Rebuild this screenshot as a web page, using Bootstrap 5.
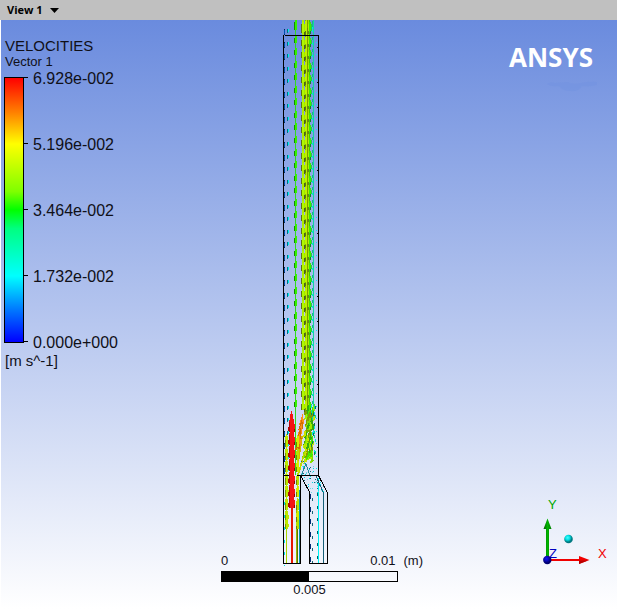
<!DOCTYPE html>
<html lang="en">
<head>
<meta charset="utf-8">
<meta name="viewport" content="width=device-width, initial-scale=1">
<title>View 1 - Velocities</title>
<link href="https://cdn.jsdelivr.net/npm/bootstrap@5.3.0/dist/css/bootstrap.min.css" rel="stylesheet">
<style>
  body { font-family: "Liberation Sans", Arial, sans-serif; color: #101018; background: #fff; }
  .view-bar { background: #c0c0c0; height: 20px; padding-left: 7px; }
  .view-btn { font: bold 11px/20px "Open Sans", Tahoma, sans-serif; color: #000; gap: 7px; }
  .viewport { background: linear-gradient(#6a8bde, #fff); margin-left: 1px; }
  .legend-pane { width: 220px; padding: 18px 0 0 3px; }
  .legend-title { font-size: 15px; line-height: 16px; padding-left: 1px; }
  .legend-sub { font-size: 13px; line-height: 15px; padding-left: 1px; }
  .ramp { width: 20px; margin: 8px 0 10px; border: 1px solid #000;
    background: linear-gradient(#f00 0%, #ff8000 13%, #ff0 25%, #7fff00 43%, #0f0 50%, #00ff80 57%, #0ff 75%, #0080ff 87%, #00f 100%); }
  .ramp-labels { height: 284px; font-size: 16px; line-height: 20px; }
  .ramp-labels li { gap: 5px; }
  .ramp-labels li::before { content: ""; width: 4px; height: 1px; margin-bottom: 3px; background: #000; }
  .legend-unit { font-size: 15px; line-height: 16px; padding-left: 1px; }
  .stage { display: grid; }
  .stage > * { grid-area: 1 / 1; }
  .duct { margin-left: 59px; }
  .scale { font-size: 13px; line-height: 16px; padding-bottom: 11px; }
  .scale-top { width: 202px; margin-bottom: 2px; }
  .scale-bar { width: 177px; height: 11px; border: 1px solid #000; background: linear-gradient(90deg, #000 50%, #fff0 50%); }
  .scale-mid { width: 177px; }
  .side-pane { padding: 18px 4px 40px 0; }
  .brand { font: bold 26px/38px "Open Sans", sans-serif; color: #fff; padding-right: 16px; }
  .brand span { padding-right: 4px; }
  .brand svg { display: block; margin: 5px 0 0 auto; }
</style>
</head>
<body class="d-flex flex-column min-vh-100">
<header class="view-bar d-flex align-items-center">
  <button type="button" class="view-btn border-0 bg-transparent p-0 d-flex align-items-center">View 1
    <svg width="9" height="5" aria-hidden="true"><path d="M0 0H9L4.500 5Z"/></svg>
  </button>
</header>
<main class="viewport flex-grow-1 d-flex">
  <section class="legend-pane flex-shrink-0" aria-label="Legend">
    <div class="legend-title">VELOCITIES</div>
    <div class="legend-sub">Vector 1</div>
    <div class="d-flex">
      <div class="ramp"></div>
      <ul class="ramp-labels list-unstyled mb-0 d-flex flex-column justify-content-between">
        <li class="d-flex align-items-center">6.928e-002</li>
        <li class="d-flex align-items-center">5.196e-002</li>
        <li class="d-flex align-items-center">3.464e-002</li>
        <li class="d-flex align-items-center">1.732e-002</li>
        <li class="d-flex align-items-center">0.000e+000</li>
      </ul>
    </div>
    <div class="legend-unit">[m s^-1]</div>
  </section>
  <section class="stage flex-shrink-0" aria-label="Velocity vectors">
    <svg class="duct" width="60" height="546" viewBox="280 20 60 546" role="img" aria-label="Vector plot of the duct">
      <g id="flow" shape-rendering="crispEdges"></g>
      <g id="jets" shape-rendering="crispEdges">
        <path d="M286.500 529V563" stroke="#a8d400"/>
        <path d="M296.500 505V563" stroke="#a0b400"/><path d="M297.500 505V563" stroke="#5c7800"/>
        <path d="M299.500 490V563" stroke="#0099b4"/>
        <path d="M318.500 478V563" stroke="#00f0f4"/>
        <path d="M316 476L323.500 493V563" stroke="#176078" fill="none"/>
      </g>
      <g fill="none" stroke="#000" shape-rendering="crispEdges">
        <path d="M285 35.500H318.500V475.500M283.500 35V563.500H300.500V475.500M283 475.500H289M297 475.500H318.500"/>
        <path d="M300.500 475.500L309.500 492V563.500H327.500V493L318.500 475.500"/>
      </g>
    </svg>
    <div class="scale align-self-end">
      <div class="scale-top d-flex"><span class="flex-grow-1">0</span><span>0.01</span><span class="ps-2">(m)</span></div>
      <div class="scale-bar"></div>
      <div class="scale-mid text-center">0.005</div>
    </div>
  </section>
  <aside class="side-pane flex-grow-1 d-flex flex-column justify-content-between align-items-end">
    <div class="brand"><span>ANSYS</span>
      <svg width="50" height="11" fill="#7090e0" fill-opacity=".4" aria-hidden="true"><path d="M0 3Q4 0 8 2L20 1Q27 4 34 2Q42 0 50 1V4Q42 6 35 5Q32 11 24 10Q15 10 12 5Q4 6 0 3Z"/></svg>
    </div>
    <svg width="72" height="74" viewBox="541 496 72 74" role="img" aria-label="Axes">
      <defs>
        <linearGradient id="gy"><stop stop-color="#006000"/><stop offset=".5" stop-color="#00b400"/><stop offset="1" stop-color="#007c00"/></linearGradient>
        <radialGradient id="gc" cx=".4" cy=".35"><stop stop-color="#4ff"/><stop offset=".55" stop-color="#00dde0"/><stop offset="1" stop-color="#007880"/></radialGradient>
        <radialGradient id="gb" cx=".4" cy=".35"><stop stop-color="#11f"/><stop offset="1" stop-color="#000070"/></radialGradient>
      </defs>
      <path d="M546 528H549V560H546ZM547.500 519.500L551.500 530H543.500Z" fill="url(#gy)"/>
      <path d="M548 560H579V562H548ZM579 557L589.500 561L579 565Z" fill="#f00000"/>
      <path d="M579 561.500H588L579 565Z" fill="#b80000"/>
      <circle cx="568.500" cy="540" r="4.300" fill="url(#gc)"/>
      <g font-family="Liberation Sans, Arial, sans-serif" font-size="13">
        <text x="548" y="510" fill="#00a800">Y</text>
        <text x="598" y="559" fill="#f00000">X</text>
        <text x="549" y="559" fill="#0000c0">Z</text>
      </g>
      <circle cx="547.300" cy="561" r="4.200" fill="url(#gb)"/>
    </svg>
  </aside>
</main>
<script>
  const flow = document.getElementById("flow"), jets = document.getElementById("jets");
  let seed = 7;
  const rnd = () => (seed = (seed * 16807) % 2147483647) / 2147483647;
  const draw = (group, d, fill) => {
    const p = document.createElementNS("http://www.w3.org/2000/svg", "path");
    p.setAttribute("d", d); p.setAttribute("fill", fill); group.appendChild(p);
  };
  const box = (g, x, y, w, h, c) => draw(g, `M${x} ${Math.round(y)}h${w}v${h}h${-w}z`, c);

  // Continuous streamline shafts
  box(flow, 295, 20, 1, 455, "#30d820");
  box(flow, 302, 20, 2, 390, "#acec00");
  box(flow, 305, 20, 1, 390, "#88b000");
  box(flow, 306, 20, 1, 390, "#b8f000");
  box(flow, 307, 20, 1, 390, "#7c9c00");
  box(flow, 308, 20, 1, 390, "#a0dc00");
  box(flow, 309, 20, 1, 400, "#40c800");
  box(flow, 313, 20, 1, 400, "#10d8a0");

  // Arrowheads, one row per grid station
  for (let i = -1; i < 36; i++) {
    const y = Math.round(29 + i * 12.55);
    if (y > 20) {
      box(flow, 284, y, 1, 6, "#00285c"); box(flow, 284, y + 1, 1, 4, "#0050b0");
      box(flow, 287, y, 1, 4, "#007080"); box(flow, 288, y, 1, 3, "#00ecf4");
      if (y > 36) box(flow, 316, y, 1, 1, "#00ecf4");
    }
    if (y > 410) continue;
    const t = Math.max(y - 6, 20);
    box(flow, 294, t + 2, 1, 5, "#148c00"); box(flow, 295, t, 2, 7, "#34f000");
    box(flow, 301, t + 4, 1, 6, "#5c7410");
    box(flow, 302, t + 2, 2, 7, "#b0f800"); box(flow, 304, t + 4, 1, 5, "#a0e800");
    box(flow, 304, t + 9, 1, 4, "#4c6418"); box(flow, 305, t + 9, 1, 3, "#5c7410");
    box(flow, 305, t + 1, 2, 7, "#c0f000"); box(flow, 308, t + 4, 1, 6, "#b0ec00");
    box(flow, 307, t + 8, 2, 3, "#6c8810");
    box(flow, 309, t + 2, 2, 7, "#3cec00"); box(flow, 310, t + 8, 1, 3, "#108820");
    box(flow, 311, t + 4, 1, 4, "#24c850");
    box(flow, 312, t + 1, 1, 3, "#18b48c"); box(flow, 312, t + 7, 1, 2, "#00e8e0");
  }
  [47, 82, 107, 170, 233, 296, 321, 384, 447].forEach(y => box(flow, 317, y, 1, 1, "#000"));

  // Mixing zone above the nozzle
  const greens = ["#48e800", "#a0ec00", "#c8e400", "#34a810", "#809c00", "#80d800"];
  for (let i = 0; i < 85; i++) {
    const y = 403 + rnd() * 52, mid = 309 - (y - 405) / 22, x = mid + (rnd() - .5) * 9;
    draw(jets, `M${x - 1} ${y + 9}L${x + 1.500} ${y}L${x + 2.500} ${y + 7}Z`, greens[i % 6]);
  }
  for (let i = 0; i < 24; i++) box(jets, 311 + Math.floor(rnd() * 5), 405 + rnd() * 50, 1, 3, ["#00dfa0", "#00e8e8", "#167060"][i % 3]);
  draw(jets, "M297 475L303 455L306 450L300 472Z", "#c0d800");
  draw(jets, "M297 460L301 436L303 436L299 462Z", "#dcb000");
  for (let i = 0; i < 6; i++) {
    const y = 417 + i * 5, x = 301 - i * .8;
    draw(jets, `M${x - 2} ${y + 8}L${x + 2} ${y - 4}L${x + 3} ${y + 7}Z`, i % 2 ? "#d07000" : "#ff8c18");
  }
  for (let i = 0; i < 60; i++) {
    const y = 461 + rnd() * 31, left = y < 476 ? 301 : 301 + (y - 476) * .55, w = y < 476 ? 13 : 17;
    box(jets, Math.round(left + rnd() * w), y, 1, 1, ["#00d8e0", "#186878", "#68d8e8"][i % 3]);
  }
  draw(jets, "M301 475L306 462L310 475L309 475L306 465L302 475Z", "#25889a");

  // Inlet jets: yellow-green on both sides, red in the core
  for (let i = 0; i < 8; i++) {
    const y = Math.round(434 + i * 12.5 - (i > 6 ? 4 : 0)), h = Math.min(13, 529 - y);
    draw(jets, `M285 ${y + h}V${y + 5}L286 ${y}H287L289 ${y + 8}L288 ${y + h}Z`, "#bce800");
    draw(jets, `M285 ${y + h}V${y + 7}L286 ${y + 5}V${y + h}Z`, "#7c9400");
    draw(jets, `M296 ${y + h}V${y + 5}L298 ${y}L299 ${y + 4}V${y + h}Z`, i % 2 ? "#b8e000" : "#d4ec00");
    draw(jets, `M296 ${y + h}V${y + 8}H297V${y + h}Z`, "#708400");
  }
  box(jets, 291, 500, 2, 63, "#e81800");
  box(jets, 290, 430, 4, 78, "#e81010");
  for (let tip = 411; tip <= 491; tip += 13) {
    const base = Math.min(tip + 21, 508);
    draw(jets, `M291 ${tip}H292L295.500 ${base - 3}L295 ${base}H289L288 ${base - 2}Z`, "#f41414");
    draw(jets, `M288 ${base - 2}L290 ${base - 12}V${base}H289Z`, "#b40404");
    box(jets, 294, base - 3, 1, 3, "#980000");
  }

  // Slow secondary inlet
  for (let y = 494; y < 558; y += 12.5) {
    box(jets, 310, y, 1, 5, "#002c78"); box(jets, 312, y + 4, 1, 3, "#186878");
    box(jets, 317, y - 1, 1, 3, "#006068"); box(jets, 284, y + 8, 1, 3, "#00e4e8");
  }
</script>
<script src="https://cdn.jsdelivr.net/npm/bootstrap@5.3.0/dist/js/bootstrap.bundle.min.js"></script>
</body>
</html>
